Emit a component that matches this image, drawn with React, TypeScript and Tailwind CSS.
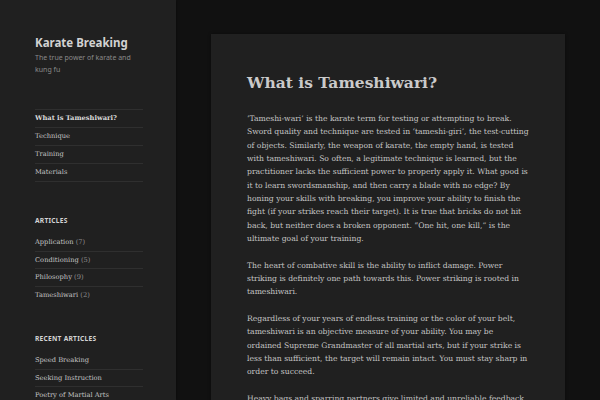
const serif = "font-['DejaVu_Serif','Liberation_Serif',serif]";
const sans = "font-['Noto_Sans','Open_Sans',sans-serif]";

const menu = [
  { label: 'What is Tameshiwari?', current: true },
  { label: 'Technique' },
  { label: 'Training' },
  { label: 'Materials' },
];

const categories = [
  { label: 'Application', count: 7 },
  { label: 'Conditioning', count: 5 },
  { label: 'Philosophy', count: 9 },
  { label: 'Tameshiwari', count: 2 },
];

const recent = ['Speed Breaking', 'Seeking Instruction', 'Poetry of Martial Arts', 'Breaking Boards'];

// lines kept as in the original layout so the wrapping matches
const paragraphs = [
  [
    '‘Tameshi-wari’ is the karate term for testing or attempting to break.',
    'Sword quality and technique are tested in ‘tameshi-giri’, the test-cutting',
    'of objects. Similarly, the weapon of karate, the empty hand, is tested',
    'with tameshiwari. So often, a legitimate technique is learned, but the',
    'practitioner lacks the sufficient power to properly apply it. What good is',
    'it to learn swordsmanship, and then carry a blade with no edge? By',
    'honing your skills with breaking, you improve your ability to finish the',
    'fight (if your strikes reach their target). It is true that bricks do not hit',
    'back, but neither does a broken opponent. “One hit, one kill,” is the',
    'ultimate goal of your training.',
  ],
  [
    'The heart of combative skill is the ability to inflict damage. Power',
    'striking is definitely one path towards this. Power striking is rooted in',
    'tameshiwari.',
  ],
  [
    'Regardless of your years of endless training or the color of your belt,',
    'tameshiwari is an objective measure of your ability. You may be',
    'ordained Supreme Grandmaster of all martial arts, but if your strike is',
    'less than sufficient, the target will remain intact. You must stay sharp in',
    'order to succeed.',
  ],
  [
    'Heavy bags and sparring partners give limited and unreliable feedback.',
    'Only a solid target tells you the truth about the power of your strike.',
  ],
];

function WidgetTitle({ children }: { children: string }) {
  return (
    <h2 className={`${sans} text-[6.6px] font-bold uppercase tracking-[0.04em] leading-[10px] text-[#d4d4d4] mb-[8px]`}>
      {children}
    </h2>
  );
}

export default function App() {
  return (
    <div className="flex h-screen overflow-hidden bg-[#111111]">
      {/* Sidebar */}
      <aside className="w-[176px] shrink-0 bg-[#202020] pl-[35px] pr-[33px] pt-[36px] shadow-[1px_0_3px_rgba(0,0,0,0.3)]">
        <h1 className={`${sans} text-[11.5px] font-bold leading-[14px] text-[#d2d2d2]`}>Karate Breaking</h1>
        <p className={`${sans} mt-[2px] text-[7px] leading-[11.5px] text-[#8a8a8a]`}>
          The true power of karate and kung fu
        </p>

        <ul className={`${serif} mt-[34px] border-t border-[rgba(190,190,190,0.1)] text-[6.7px] text-[#c4c4c4]`}>
          {menu.map((m) => (
            <li
              key={m.label}
              className={`border-b border-[rgba(190,190,190,0.1)] leading-[17px] ${m.current ? 'font-bold text-[#dadada]' : ''}`}
            >
              {m.label}
            </li>
          ))}
        </ul>

        <section className="mt-[34px]">
          <WidgetTitle>Articles</WidgetTitle>
          <ul className={`${serif} text-[6.7px]`}>
            {categories.map((c, i) => (
              <li
                key={c.label}
                className={`leading-[16.5px] text-[#8f8f8f] ${i > 0 ? 'border-t border-[rgba(190,190,190,0.1)]' : ''}`}
              >
                <span className="text-[#c4c4c4]">{c.label}</span> ({c.count})
              </li>
            ))}
          </ul>
        </section>

        <section className="mt-[31px]">
          <WidgetTitle>Recent Articles</WidgetTitle>
          <ul className={`${serif} text-[6.7px] text-[#c4c4c4]`}>
            {recent.map((r, i) => (
              <li key={r} className={`leading-[16.5px] ${i > 0 ? 'border-t border-[rgba(190,190,190,0.1)]' : ''}`}>
                {r}
              </li>
            ))}
          </ul>
        </section>
      </aside>

      {/* Main */}
      <main className="flex-1 pl-[35px] pt-[34px]">
        <article className="w-[354px] min-h-full bg-[#202020] px-[36px] pt-[39px] shadow-[0_0_3px_rgba(0,0,0,0.4)]">
          <h1 className={`${serif} text-[15.5px] font-bold leading-[20px] text-[#cacaca]`}>What is Tameshiwari?</h1>
          <div className={`${serif} mt-[19px] text-[7.65px] leading-[13.33px] text-[#c4c4c4]`}>
            {paragraphs.map((lines, i) => (
              <p key={i} className="mb-[13.33px] whitespace-nowrap">
                {lines.map((l, j) => (
                  <span key={j}>
                    {l}
                    {j < lines.length - 1 && <br />}
                  </span>
                ))}
              </p>
            ))}
          </div>
        </article>
      </main>
    </div>
  );
}
